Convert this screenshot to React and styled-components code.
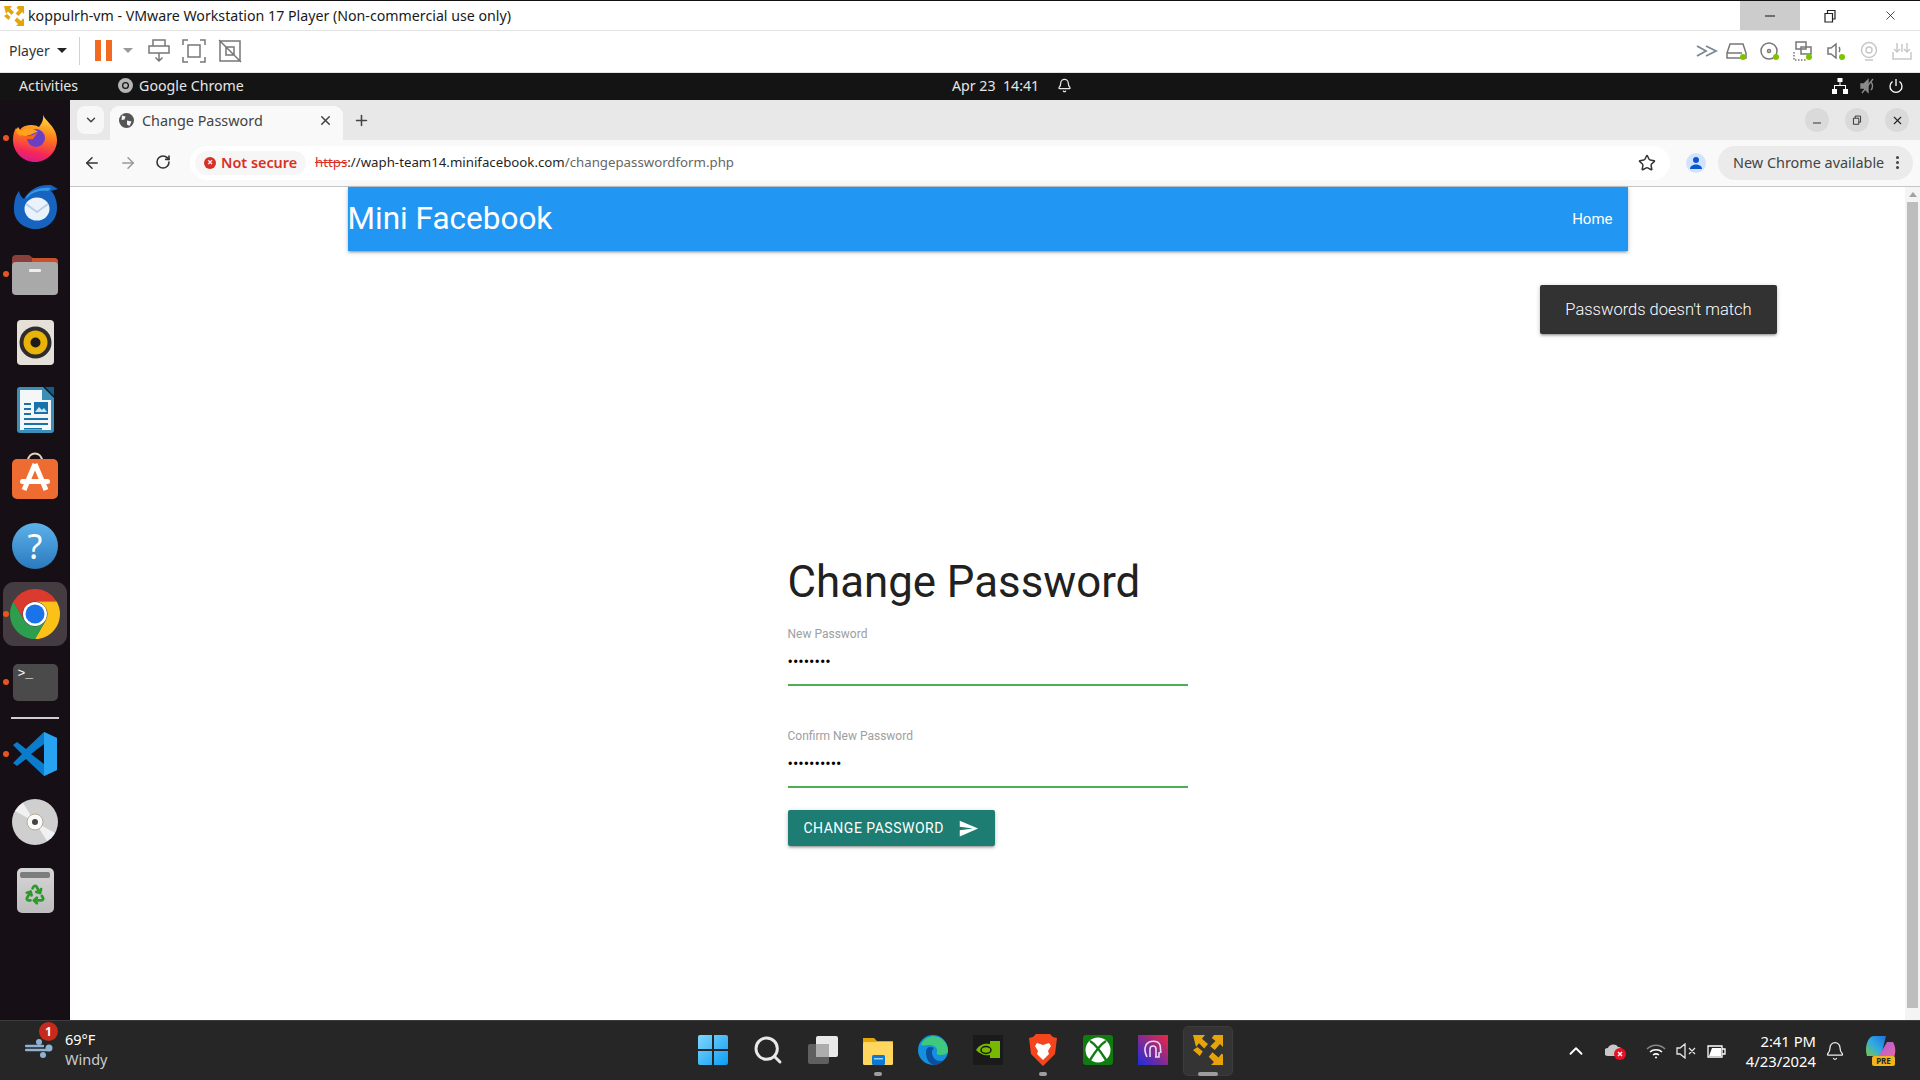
import React from "react";
import styled, { createGlobalStyle } from "styled-components";
import { Recycle, Bell, ChevronUp, ArrowLeft, ArrowRight, RotateCw, X, Plus, ChevronDown, Star, Search } from "lucide-react";

const Global = createGlobalStyle`
  html, body { margin: 0; padding: 0; background: #fff; overflow: hidden; }
  * { box-sizing: border-box; }
  #root { width: 1920px; height: 1080px; }
`;

const Screen = styled.div`
  width: 1920px;
  height: 1080px;
  display: flex;
  flex-direction: column;
  overflow: hidden;
  font-family: "Noto Sans", sans-serif;
`;

/* vmware title + toolbar */
const TitleBar = styled.div`
  height: 30px;
  flex: none;
  border-top: 1px solid #111;
  background: #fff;
  display: flex;
  align-items: center;
  padding-left: 4px;
  font-size: 14.2px;
  color: #1a1a1a;
`;
const TitleText = styled.span`
  flex: 1;
  margin-left: 4px;
  padding-bottom: 1px;
`;
const WinBtn = styled.div`
  width: 60px;
  height: 29px;
  display: flex;
  align-items: center;
  justify-content: center;
  background: ${({ $hover }) => ($hover ? "#cccccc" : "transparent")};
`;
const VmBar = styled.div`
  height: 43px;
  flex: none;
  background: #fff;
  border-top: 1px solid #e4e4e4;
  border-bottom: 1px solid #e4e4e4;
  display: flex;
  align-items: center;
  padding: 0 0 2px 9px;
  color: #333;
  font-size: 14px;
`;
const PlayerLabel = styled.span`
  width: 48px;
`;
const Caret = styled.span`
  width: 0;
  height: 0;
  border-left: 5px solid transparent;
  border-right: 5px solid transparent;
  border-top: 5px solid ${({ $c }) => $c || "#222"};
`;
const VDivider = styled.span`
  width: 1px;
  height: 28px;
  background: #d0d0d0;
  margin: 0 15px 0 12px;
`;
const Pause = styled.span`
  width: 17px;
  height: 21px;
  margin-right: 11px;
  border-left: 6px solid #f26a21;
  border-right: 6px solid #f26a21;
`;
const VmIcons = styled.div`
  display: flex;
  gap: 12px;
  margin-left: 15px;
`;
const Spacer = styled.div`
  flex: 1;
`;
const VmStatus = styled.div`
  display: flex;
  align-items: center;
  gap: 11px;
  margin-right: 7px;
`;
const MoreGlyph = styled.svg`
  margin-right: -3px;
`;

/* ubuntu top bar */
const GnomeBar = styled.div`
  height: 27px;
  flex: none;
  background: #141414;
  color: #e6e6e6;
  font-size: 14.2px;
  display: flex;
  align-items: center;
  padding-bottom: 2px;
`;
const GnomeLeft = styled.div`
  flex: 0 0 952px;
  display: flex;
  align-items: center;
  padding-left: 19px;
`;
const AppName = styled.span`
  display: flex;
  align-items: center;
  gap: 6px;
  margin-left: 40px;
`;
const GnomeClock = styled.div`
  display: flex;
  align-items: center;
  gap: 18px;
  flex: 1;
`;
const GnomeTray = styled.div`
  display: flex;
  align-items: center;
  gap: 12px;
  padding-right: 16px;
`;

const Desktop = styled.div`
  flex: 1;
  min-height: 0;
  display: flex;
`;

/* dock */
const Dock = styled.div`
  width: 70px;
  flex: none;
  background: #170f16;
  display: flex;
  flex-direction: column;
  padding-top: 4px;
`;
const DockItem = styled.div`
  position: relative;
  height: 68px;
  display: flex;
  align-items: center;
  justify-content: center;
  &::before {
    content: "";
    display: ${({ $active }) => ($active ? "block" : "none")};
    position: absolute;
    inset: 2px 3px;
    border-radius: 11px;
    background: #443c40;
  }
  &::after {
    content: "";
    display: ${({ $dot }) => ($dot ? "block" : "none")};
    position: absolute;
    left: 3px;
    top: 31px;
    width: 6px;
    height: 6px;
    border-radius: 50%;
    background: #e95420;
  }
  svg {
    position: relative;
  }
`;
const DockSeparator = styled.div`
  height: 2px;
  margin: 1px 11px 1px;
  background: #cfcfcf;
`;
const TerminalIcon = styled.div`
  position: relative;
  width: 45px;
  height: 37px;
  border-radius: 5px;
  background: #4a4a4a;
  color: #fff;
  font: 13px "Liberation Mono", monospace;
  padding: 2px 0 0 5px;
`;
const HelpIcon = styled.div`
  width: 46px;
  height: 46px;
  border-radius: 50%;
  background: linear-gradient(#5db2ea, #2a79bd);
  color: #fff;
  font: 34px/46px "Noto Sans", sans-serif;
  text-align: center;
`;
const TrashIcon = styled.div`
  width: 37px;
  height: 45px;
  border-radius: 5px;
  background: linear-gradient(#d6d6d6, #bdbdbd);
  padding-top: 4px;
  display: flex;
  flex-direction: column;
  align-items: center;
  gap: 5px;
  &::before {
    content: "";
    width: 30px;
    height: 6px;
    border-radius: 2px;
    background: #7d7d7d;
  }
`;
const BagSvg = styled.svg`
  margin-top: -5px;
`;

/* chrome */
const Chrome = styled.div`
  flex: 1;
  min-width: 0;
  display: flex;
  flex-direction: column;
`;
const TabStrip = styled.div`
  height: 40px;
  flex: none;
  background: #e8e8e8;
  display: flex;
  align-items: flex-end;
  padding-left: 7px;
  color: #444;
`;
const TabMenu = styled.div`
  width: 27px;
  height: 28px;
  margin-bottom: 6px;
  border-radius: 8px;
  background: #f7f7f7;
  display: flex;
  align-items: center;
  justify-content: center;
`;
const Tab = styled.div`
  position: relative;
  width: 233px;
  height: 34px;
  margin-left: 6px;
  border-radius: 9px 9px 0 0;
  background: #f9f9f9;
  display: flex;
  align-items: center;
  padding: 0 10px 6px 9px;
  gap: 8px;
  font-size: 14.4px;
  color: #444;
`;
const TabTitle = styled.span`
  flex: 1;
`;
const NewTab = styled.div`
  margin: 0 0 8px 10px;
  height: 24px;
  display: flex;
  align-items: center;
`;
const WindowControls = styled.div`
  margin: 0 11px 8px auto;
  display: flex;
  gap: 16px;
`;
const RoundCtl = styled.div`
  width: 24px;
  height: 24px;
  border-radius: 50%;
  background: #dadada;
  display: flex;
  align-items: center;
  justify-content: center;
`;
const AddressBar = styled.div`
  height: 47px;
  flex: none;
  background: #f9f9f9;
  border-bottom: 1px solid #c6c6c6;
  display: flex;
  align-items: center;
  padding: 0 7px 0 13px;
  color: #444;
`;
const NavButtons = styled.div`
  display: flex;
  gap: 18px;
  margin-right: 19px;
`;
const Omnibox = styled.div`
  width: 1481px;
  height: 34px;
  border-radius: 17px;
  background: #fff;
  display: flex;
  align-items: center;
  padding: 0 14px 0 5px;
  font-size: 13.25px;
`;
const SecurePill = styled.div`
  width: 111px;
  height: 24px;
  border-radius: 12px;
  background: #f6f6f6;
  display: flex;
  align-items: center;
  gap: 5px;
  padding: 0 0 1px 9px;
  color: #d93025;
  font-weight: 600;
  font-size: 14.4px;
  margin-right: 9px;
`;
const SecureDot = styled.span`
  flex: none;
  width: 12px;
  height: 12px;
  border-radius: 50%;
  background: #d93025;
  color: #fff;
  font-size: 10px;
  line-height: 11px;
  text-align: center;
  font-weight: 700;
`;
const Url = styled.div`
  flex: 1;
  color: #1f1f1f;
  white-space: nowrap;
  padding-bottom: 2px;
`;
const Scheme = styled.span`
  color: #d93025;
  text-decoration: line-through;
`;
const UrlPath = styled.span`
  color: #666;
`;
const Avatar = styled.div`
  width: 20px;
  height: 20px;
  margin: 0 12px 0 16px;
  border-radius: 50%;
  background: #d3e3fd;
  display: flex;
  align-items: center;
  justify-content: center;
`;
const UpdateChip = styled.div`
  width: 195px;
  height: 34px;
  border-radius: 17px;
  background: #ebebeb;
  display: flex;
  align-items: center;
  justify-content: space-between;
  padding: 0 14px 2px 15px;
  font-size: 14.4px;
  color: #444;
  white-space: nowrap;
`;
const Kebab = styled.span`
  width: 3px;
  height: 3px;
  border-radius: 50%;
  background: #444;
  box-shadow: 0 -5px #444, 0 5px #444;
`;

/* the page */
const Viewport = styled.div`
  flex: 1;
  min-height: 0;
  display: flex;
  background: #fff;
`;
const Page = styled.div`
  position: relative;
  flex: 1;
  font-family: Roboto, sans-serif;
`;
const Navbar = styled.nav`
  width: 1280px;
  height: 64px;
  margin: 0 auto;
  background: #2196f3;
  color: #fff;
  display: flex;
  align-items: center;
  justify-content: space-between;
  padding-right: 15px;
  box-shadow: 0 2px 2px 0 rgba(0, 0, 0, 0.14), 0 3px 1px -2px rgba(0, 0, 0, 0.12),
    0 1px 5px 0 rgba(0, 0, 0, 0.2);
`;
const Brand = styled.span`
  font-size: 31.5px;
  padding-bottom: 2px;
`;
const NavLink = styled.span`
  font-size: 15px;
`;
const Toast = styled.div`
  position: absolute;
  top: 98px;
  left: 1470px;
  width: 237px;
  height: 49px;
  border-radius: 2px;
  background: #323232;
  color: #fff;
  font-size: 16.5px;
  font-weight: 300;
  display: flex;
  align-items: center;
  justify-content: center;
  white-space: nowrap;
  box-shadow: 0 2px 2px 0 rgba(0, 0, 0, 0.14), 0 3px 1px -2px rgba(0, 0, 0, 0.12),
    0 1px 5px 0 rgba(0, 0, 0, 0.2);
`;
const Form = styled.form`
  width: 400px;
  margin: 301px auto 0;
`;
const Heading = styled.h1`
  margin: 0 0 15px;
  font-size: 43.8px;
  font-weight: 400;
  line-height: 60px;
  color: #212121;
`;
const Field = styled.label`
  display: block;
  margin-bottom: 43px;
  &:last-of-type {
    margin-bottom: 22px;
  }
`;
const FieldLabel = styled.span`
  display: block;
  font-size: 12px;
  line-height: 14px;
  color: #9e9e9e;
`;
const Input = styled.input`
  display: block;
  width: 100%;
  height: 42px;
  margin-top: 3px;
  padding: 0 0 6px;
  border: 0;
  border-bottom: 2px solid #4caf50;
  outline: 0;
  background: transparent;
  font: 16px Roboto, sans-serif;
  color: #000;
`;
const Submit = styled.button`
  height: 36px;
  padding: 0 16px;
  border: 0;
  border-radius: 2px;
  background: #1d7d72;
  color: #fff;
  font: 400 14px Roboto, sans-serif;
  letter-spacing: 0.5px;
  text-transform: uppercase;
  display: flex;
  align-items: center;
  gap: 14px;
  box-shadow: 0 2px 2px 0 rgba(0, 0, 0, 0.14), 0 3px 1px -2px rgba(0, 0, 0, 0.12),
    0 1px 5px 0 rgba(0, 0, 0, 0.2);
`;
const Scrollbar = styled.div`
  width: 15px;
  flex: none;
  background: #f4f4f4;
  display: flex;
  flex-direction: column;
  align-items: center;
  padding: 5px 0 12px;
`;
const ScrollArrow = styled.span`
  width: 0;
  height: 0;
  border-left: 4px solid transparent;
  border-right: 4px solid transparent;
  border-bottom: 5px solid #a3a3a3;
`;
const Thumb = styled.div`
  flex: 1;
  width: 11px;
  margin-top: 5px;
  background: #bdbdbd;
`;

/* windows taskbar */
const Taskbar = styled.div`
  height: 60px;
  flex: none;
  background: #262626;
  border-top: 1px solid #3d3d3d;
  display: grid;
  grid-template-columns: 1fr auto 1fr;
  align-items: center;
  color: #fff;
  font-family: "Noto Sans", sans-serif;
`;
const Weather = styled.div`
  display: flex;
  align-items: center;
  padding: 0 0 3px 25px;
  gap: 12px;
  font-size: 14.5px;
  line-height: 20px;
`;
const WeatherIcon = styled.div`
  position: relative;
  width: 28px;
  height: 20px;
`;
const Badge = styled.span`
  position: absolute;
  top: -17px;
  left: 14px;
  width: 19px;
  height: 19px;
  border-radius: 50%;
  background: #c42b1c;
  font-size: 12px;
  line-height: 19px;
  font-weight: 700;
  text-align: center;
`;
const Muted = styled.div`
  color: #cccccc;
`;
const TaskIcons = styled.div`
  display: flex;
`;
const TaskItem = styled.div`
  position: relative;
  width: 55px;
  height: 50px;
  padding-bottom: 2px;
  display: flex;
  align-items: center;
  justify-content: center;
  &::before {
    content: "";
    display: ${({ $active }) => ($active ? "block" : "none")};
    position: absolute;
    inset: 0 2.5px;
    border-radius: 5px;
    background: #343434;
    border: 1px solid #3c3c3c;
  }
  &::after {
    content: "";
    display: ${({ $run }) => ($run ? "block" : "none")};
    position: absolute;
    left: 50%;
    bottom: 0;
    width: ${({ $active }) => ($active ? "20px" : "8px")};
    height: 4px;
    margin-left: ${({ $active }) => ($active ? "-10px" : "-4px")};
    border-radius: 2px;
    background: #9d9d9d;
  }
  svg {
    position: relative;
  }
`;
const Tray = styled.div`
  display: flex;
  align-items: center;
  justify-content: flex-end;
  padding-right: 23px;
`;
const TrayIcons = styled.div`
  display: flex;
  align-items: center;
  gap: ${({ $gap }) => $gap}px;
  margin-right: ${({ $after }) => $after || 0}px;
`;
const Clock = styled.div`
  width: 90px;
  text-align: right;
  font-size: 14.8px;
  line-height: 20px;
  white-space: nowrap;
`;
const BellSlot = styled.div`
  margin: 0 20px 0 9px;
  display: flex;
`;

/* drawings */
const Firefox = () => (
  <svg width="46" height="48" viewBox="0 0 46 48">
    <defs>
      <linearGradient id="ff" x1="0.6" y1="0" x2="0.4" y2="1">
        <stop offset="0" stopColor="#ffe03a" />
        <stop offset="0.45" stopColor="#ff7a1a" />
        <stop offset="0.8" stopColor="#f5275a" />
        <stop offset="1" stopColor="#d91a8c" />
      </linearGradient>
    </defs>
    <path d="M31 0c1 7 14 12 14 26 0 12-10 22-22 22S1 38 1 26c0-5 1-9 3-12l3 4c1-3 3-5 6-6 6-2 11-1 14 1 3-4 5-8 4-13z" fill="url(#ff)" />
    <circle cx="24" cy="24" r="9" fill="#6b3fc4" />
    <path d="M4 16c2 8 8 6 14 5 3-1 5-3 8-3-4-4-12-5-17-1l-3-4z" fill="#ffa21c" />
    <path d="M8 20c6 4 13 2 18-2l-5 7c-5 1-10-1-13-5z" fill="#f7641e" />
  </svg>
);
const Thunderbird = () => (
  <svg width="48" height="48" viewBox="0 0 48 48">
    <path d="M3 28c0-8 1-14 5-19 1 4 2 6 5 8 5-9 14-15 27-14l7 4-7 2c4 4 6 10 6 17 0 12-9 21-21 21S3 39 3 28z" fill="#1664c0" />
    <path d="M14 17c5-8 13-12 26-11l-3 3c-6-1-15 0-20 6z" fill="#3a9ae8" />
    <ellipse cx="26" cy="27" rx="12.500" ry="11.500" fill="#eaf2fb" />
    <path d="M15 22l11 8 11-8" fill="none" stroke="#b9cfe8" strokeWidth="2" />
  </svg>
);
const Folder = () => (
  <svg width="46" height="41" viewBox="0 0 46 41">
    <path d="M0 5a4 4 0 0 1 4-4h13l4 3h21a4 4 0 0 1 4 4v12H0z" fill="#8a3f3c" />
    <path d="M20 4h22a4 4 0 0 1 4 4v6H20z" fill="#c9512c" />
    <rect y="8" width="46" height="33" rx="4" fill="#a9a9a9" />
    <rect x="17" y="15" width="12" height="3" rx="1" fill="#eee" />
  </svg>
);
const Speaker = () => (
  <svg width="37" height="45" viewBox="0 0 37 45">
    <rect width="37" height="45" rx="4" fill="#e6e1d8" />
    <circle cx="18.5" cy="22.5" r="16" fill="#2e2d2b" />
    <circle cx="18.5" cy="22.5" r="12" fill="#eab308" />
    <circle cx="18.5" cy="22.5" r="5" fill="#1c1c1c" />
  </svg>
);
const Writer = () => (
  <svg width="37" height="46" viewBox="0 0 37 46">
    <path d="M3 0h23l11 11v32a3 3 0 0 1-3 3H3a3 3 0 0 1-3-3V3a3 3 0 0 1 3-3z" fill="#3a8fb7" />
    <path d="M3 3h22v10h9v30H3z" fill="#f4f6f8" />
    <path d="M28 0l9 9V0z" fill="#135e87" />
    <g fill="#1873aa">
      <rect x="7" y="16" width="7" height="2" />
      <rect x="7" y="21" width="7" height="2" />
      <rect x="7" y="26" width="7" height="2" />
      <rect x="7" y="31" width="24" height="2" />
      <rect x="7" y="36" width="24" height="2" />
      <rect x="7" y="41" width="18" height="1.6" />
      <rect x="17" y="15" width="14" height="12" />
    </g>
    <path d="M18 25l4-5 3 3 2-2 3 4z" fill="#d2e4f2" />
  </svg>
);
const AppStore = () => (
  <BagSvg width="46" height="47" viewBox="0 0 46 47">
    <path d="M16 9c0-10 14-10 14 0" fill="none" stroke="#e9d2bd" strokeWidth="2" />
    <rect y="7" width="46" height="40" rx="5" fill="#ee6b32" />
    <path d="M23 12L12 38M23 12l11 26" stroke="#fff" strokeWidth="5" />
    <rect x="8" y="27" width="30" height="5" rx="2.5" fill="#fff" />
  </BagSvg>
);
const ChromeLogo = ({ size = 50 }) => (
  <svg width={size} height={size} viewBox="4 4 40 40">
    <path d="M24 4a20 20 0 0 1 17.32 10H24a10 10 0 0 0-8.66 15L6.68 14A20 20 0 0 1 24 4z" fill="#db3a2f" />
    <path d="M41.32 14A20 20 0 0 1 24 44l8.66-15A10 10 0 0 0 24 14z" fill="#fbc116" />
    <path d="M6.68 14l8.66 15a10 10 0 0 0 17.32 0L24 44A20 20 0 0 1 6.68 14z" fill="#2d9e4d" />
    <circle cx="24" cy="24" r="9.6" fill="#fff" />
    <circle cx="24" cy="24" r="7.6" fill="#1a73e8" />
  </svg>
);
const VsCode = () => (
  <svg width="44" height="44" viewBox="0 0 44 44">
    <path d="M31 0l13 6v32l-13 6-18-17-9 7-4-3 9-9-9-9 4-3 9 7z" fill="#0a7ccb" />
    <path d="M31 0l13 6v32l-13 6z" fill="#27a3f2" />
    <path d="M31 12L18 22l13 10z" fill="#170f16" />
  </svg>
);
const Disc = () => (
  <svg width="46" height="46" viewBox="0 0 46 46">
    <circle cx="23" cy="23" r="23" fill="#cfcfcf" />
    <path d="M23 23L3 12a23 23 0 0 1 8-8zM23 23l20 11a23 23 0 0 1-8 8z" fill="#f1f1f1" />
    <circle cx="23" cy="23" r="8" fill="#fafafa" stroke="#b5ac9a" />
    <circle cx="23" cy="23" r="3" fill="#444" />
  </svg>
);

const StatusDot = () => <circle cx="17" cy="17" r="3" fill="#7dc400" stroke="none" />;
const Drive = () => (
  <svg width="22" height="22" viewBox="0 0 22 22" fill="none" stroke="#777" strokeWidth="1.5">
    <path d="M1 18V13L4 4h13l3 9v5zM1 13h15" />
    <StatusDot />
  </svg>
);
const CdStatus = () => (
  <svg width="22" height="22" viewBox="0 0 22 22" fill="none" stroke="#777" strokeWidth="1.5">
    <circle cx="10" cy="11" r="8" />
    <circle cx="10" cy="11" r="1.5" />
    <StatusDot />
  </svg>
);
const NetStatus = () => (
  <svg width="22" height="22" viewBox="0 0 22 22" fill="none" stroke="#777" strokeWidth="1.5">
    <path d="M4 2h10v7H4zM9 7h10v7H9z" fill="#fff" />
    <path d="M2 12v8h12" strokeDasharray="1.5 1.5" />
    <StatusDot />
  </svg>
);
const SoundStatus = () => (
  <svg width="22" height="22" viewBox="0 0 22 22" fill="none" stroke="#777" strokeWidth="1.5">
    <path d="M3 8v6h3l5 4V4L6 8zM14 7c1 1 1 4 0 5" />
    <StatusDot />
  </svg>
);
const Webcam = () => (
  <svg width="22" height="22" viewBox="0 0 22 22" fill="none" stroke="#c9c9c9" strokeWidth="1.5">
    <circle cx="11" cy="10" r="7.5" />
    <circle cx="11" cy="10" r="3" />
    <path d="M7 20h8" />
  </svg>
);
const Usb = () => (
  <svg width="22" height="22" viewBox="0 0 22 22" fill="none" stroke="#c9c9c9" strokeWidth="1.5">
    <path d="M2 12v7h18v-7M6 3v9M16 3v9M11 4v8M3 9l3 3 3-3M13 9l3 3 3-3" />
  </svg>
);
const SendKeys = () => (
  <svg width="22" height="24" viewBox="0 0 22 24" fill="none" stroke="#777" strokeWidth="1.5">
    <path d="M5 1h12v6H5zM1 7h20v7H1zM11 14v8M7.500 18.500l3.500 3.500 3.500-3.500" />
  </svg>
);
const FitGuest = () => (
  <svg width="24" height="24" viewBox="0 0 24 24" fill="none" stroke="#777" strokeWidth="1.5">
    <path d="M1 6V1h5M18 1h5v5M23 18v5h-5M6 23H1v-5M6 6h12v12H6z" />
  </svg>
);
const NoFit = () => (
  <svg width="24" height="24" viewBox="0 0 24 24" fill="none" stroke="#777" strokeWidth="1.5">
    <path d="M2 2h20v20H2zM8 8h8v8H8zM1 1l22 22" />
  </svg>
);
const VmLogo = ({ size = 20 }) => (
  <svg width={size} height={size} viewBox="0 0 20 20" fill="#e5a50a">
    <path d="M0 0h8L6 2.500l4 3.500-2.500 3L4 5.500 2 8zM20 0v8l-2-2-3.500 4-3-2.500L15 4l-2.500-2L14 0zM20 20h-8l2-2-3.500-3.500 2.500-3 4 3.500 2-2.500 1 .5zM0 10l3-2 3.500 3-2 3z" />
  </svg>
);
const MonoChrome = () => (
  <svg width="15" height="15" viewBox="0 0 15 15">
    <circle cx="7.5" cy="7.5" r="7.5" fill="#b5b5b5" />
    <circle cx="7.5" cy="7.5" r="3.5" fill="#141414" />
    <circle cx="7.5" cy="7.5" r="2.2" fill="#b5b5b5" />
  </svg>
);
const TabGlobe = () => (
  <svg width="15" height="15" viewBox="0 0 15 15">
    <circle cx="7.5" cy="7.5" r="7.5" fill="#555" />
    <path d="M3 2.500l3.500 1-1 3-3 .5zM8 7.500l4.500 1-2 4.500-2.500-1.500z" fill="#f9f9f9" />
  </svg>
);
const NetTree = () => (
  <svg width="16" height="16" viewBox="0 0 16 16" fill="#fff">
    <rect x="5.5" y="0" width="5" height="4" />
    <rect x="0" y="11" width="5" height="5" />
    <rect x="11" y="11" width="5" height="5" />
    <path d="M7.5 4h1v3h5.5v4h-1V8H3v3H2V7h5.5z" />
  </svg>
);
const Muteish = () => (
  <svg width="16" height="16" viewBox="0 0 16 16" fill="none" stroke="#8a8a8a" strokeWidth="1.4">
    <path d="M1 6v4h3l4 4V2L4 6z" fill="#8a8a8a" />
    <path d="M11 4c2 2 2 6 0 8M2 15L13 1" />
  </svg>
);
const Power = () => (
  <svg width="16" height="16" viewBox="0 0 16 16" fill="none" stroke="#fff" strokeWidth="1.3">
    <path d="M8 1v7M4.5 3.5a6 6 0 1 0 7 0" />
  </svg>
);
const SendIcon = () => (
  <svg width="21" height="21" viewBox="0 0 24 24" fill="#fff">
    <path d="M2.01 21L23 12 2.01 3 2 10l15 2-15 2z" />
  </svg>
);
const Person = () => (
  <svg width="14" height="14" viewBox="0 0 14 14" fill="#0b57d0">
    <circle cx="7" cy="4" r="3" />
    <path d="M1 13c0-3 3-4.500 6-4.500s6 1.500 6 4.500z" />
  </svg>
);
const RestoreSmall = ({ size = 14 }) => (
  <svg width={size} height={size} viewBox="0 0 14 14" fill="none" stroke="#222" strokeWidth="1.2">
    <path d="M2 4.500h7.500V13H2zM4.500 4.500V1.500H12V10H9.500" />
  </svg>
);
const WindIcon = () => (
  <svg width="28" height="20" viewBox="0 0 28 20" fill="none" stroke="#8fb1d3" strokeWidth="2.4" strokeLinecap="round">
    <path d="M1 7h17M1 11h22" />
    <circle cx="14" cy="3" r="3" fill="#8fb1d3" stroke="none" />
    <circle cx="24" cy="9" r="3.5" fill="#8fb1d3" stroke="none" />
    <circle cx="18" cy="16" r="3" fill="#8fb1d3" stroke="none" />
  </svg>
);
const WinLogo = () => (
  <svg width="30" height="30" viewBox="0 0 30 30">
    <defs>
      <linearGradient id="win" x1="0" y1="0" x2="1" y2="1">
        <stop offset="0" stopColor="#7fd8ff" />
        <stop offset="1" stopColor="#0c9cf2" />
      </linearGradient>
    </defs>
    <path d="M0 2a2 2 0 0 1 2-2h12v14H0zM16 0h12a2 2 0 0 1 2 2v12H16zM0 16h14v14H2a2 2 0 0 1-2-2zM16 16h14v12a2 2 0 0 1-2 2H16z" fill="url(#win)" />
  </svg>
);
const TaskView = () => (
  <svg width="30" height="30" viewBox="0 0 30 30">
    <rect x="0" y="9" width="21" height="20" rx="2" fill="#5f5f5f" />
    <rect x="8" y="1" width="22" height="21" rx="2" fill="#e9e9e9" />
    <rect x="8" y="9" width="13" height="13" fill="#adadad" />
  </svg>
);
const Explorer = () => (
  <svg width="30" height="30" viewBox="0 0 30 30">
    <path d="M0 3h11l3 3h16v6H0z" fill="#e5a50a" />
    <rect y="7" width="30" height="23" rx="1.500" fill="#ffd75e" />
    <rect x="9" y="20" width="13" height="10" rx="1.500" fill="#0a78d4" />
    <rect x="11" y="23" width="9" height="1.500" fill="#9ad2f5" />
  </svg>
);
const Edge = () => (
  <svg width="30" height="30" viewBox="0 0 30 30">
    <circle cx="15" cy="15" r="15" fill="#1490df" />
    <path d="M3 10C6 2 14 0 20 2c6 2 10 8 10 14 0 3-3 4-8 4-3 0-4-1-3-3 1-4-3-7-7-7-4 0-7 1-9 0z" fill="#3ec97e" />
    <path d="M8 17c0-5 4-6 8-4-3 2-3 8 2 12 3 2 7 1 9-1-3 4-7 6-11 6-5-1-8-6-8-13z" fill="#0b4f9e" />
  </svg>
);
const Nvidia = () => (
  <svg width="30" height="30" viewBox="0 0 30 30">
    <rect width="30" height="30" fill="#1a1a1a" />
    <path d="M3 15c4-6 9-7 14-6v-3h10v17H17v-3c-6 1-10-1-14-5z" fill="#76b900" />
    <ellipse cx="13" cy="15" rx="5" ry="3.500" fill="none" stroke="#1a1a1a" strokeWidth="1.500" />
  </svg>
);
const Brave = () => (
  <svg width="28" height="32" viewBox="0 0 28 32">
    <path d="M7 0h14l3 3 4 1-2 16-12 12L2 20 0 4l4-1z" fill="#f5451d" />
    <path d="M8 9l6 2 6-2 2 3-3 5 1 3-6 6-6-6 1-3-3-5z" fill="#fff" />
  </svg>
);
const Xbox = () => (
  <svg width="30" height="30" viewBox="0 0 30 30">
    <rect width="30" height="30" rx="3" fill="#107c10" />
    <circle cx="15" cy="15" r="12.500" fill="#fff" />
    <path d="M7 6c5 3 11 11 16 19M23 6C18 9 12 17 7 25" fill="none" stroke="#107c10" strokeWidth="2.400" />
  </svg>
);
const Clipchamp = () => (
  <svg width="30" height="30" viewBox="0 0 30 30">
    <defs>
      <linearGradient id="cc" x1="0" y1="1" x2="1" y2="0">
        <stop offset="0" stopColor="#1c2ee0" />
        <stop offset="1" stopColor="#f0273f" />
      </linearGradient>
    </defs>
    <rect width="30" height="30" fill="url(#cc)" />
    <path d="M9 22c-2-4-3-8-1-12 3-5 12-5 14 0 1 4 0 5 1 7l-2 1v4h-4M12 22v-8a3 3 0 0 1 6 0v8" fill="none" stroke="#e8d8f5" strokeWidth="1.600" />
  </svg>
);
const CloudOff = () => (
  <svg width="22" height="18" viewBox="0 0 22 18">
    <path d="M3 14a4 4 0 0 1 0-8c1-4 8-5 10-1 3 0 4 2 4 4v5z" fill="#c8c8c8" />
    <circle cx="15" cy="12" r="6" fill="#e81123" />
    <path d="M13 10l4 4M17 10l-4 4" stroke="#fff" strokeWidth="1.400" />
  </svg>
);
const Wifi = () => (
  <svg width="20" height="16" viewBox="0 0 20 16" fill="none" stroke="#fff" strokeWidth="1.500">
    <path d="M1 6c5-5 13-5 18 0" stroke="#888" />
    <path d="M4 9c3-3 9-3 12 0M7 12c2-1.500 4-1.500 6 0" />
    <circle cx="10" cy="14.500" r="1" fill="#fff" stroke="none" />
  </svg>
);
const SpeakerMute = () => (
  <svg width="20" height="16" viewBox="0 0 20 16" fill="none" stroke="#e5e5e5" strokeWidth="1.300">
    <path d="M1 5v6h3l5 4V1L4 5zM13 5l6 6M19 5l-6 6" />
  </svg>
);
const Battery = () => (
  <svg width="20" height="17" viewBox="0 0 20 17" fill="none" stroke="#fff" strokeWidth="1.300">
    <path d="M2 4h14v11H2zM16 7h3v5h-3" />
    <path d="M3 14l3-8h9v8z" fill="#fff" stroke="none" />
  </svg>
);
const Copilot = () => (
  <svg width="32" height="32" viewBox="0 0 32 32">
    <defs>
      <linearGradient id="cp" x1="0" y1="1" x2="1" y2="0">
        <stop offset="0" stopColor="#7ac943" />
        <stop offset="0.5" stopColor="#30a8e6" />
        <stop offset="1" stopColor="#1d70d8" />
      </linearGradient>
      <linearGradient id="cp2" x1="0" y1="0" x2="1" y2="1">
        <stop offset="0" stopColor="#a45bd8" />
        <stop offset="1" stopColor="#ee6aa8" />
      </linearGradient>
    </defs>
    <path d="M9 1h12l-5 20H2C-1 12 3 1 9 1z" fill="url(#cp)" />
    <path d="M22 7h6c3 5 3 12 0 17H12z" fill="url(#cp2)" />
    <rect x="7" y="21" width="23" height="10" rx="2" fill="#f0b41e" />
    <text x="18.500" y="29" fontSize="8" fontWeight="700" textAnchor="middle" fill="#222" fontFamily="Noto Sans">PRE</text>
  </svg>
);

const dockOne = [
  { icon: <Firefox />, dot: true },
  { icon: <Thunderbird /> },
  { icon: <Folder />, dot: true },
  { icon: <Speaker /> },
  { icon: <Writer /> },
  { icon: <AppStore /> },
  { icon: <HelpIcon>?</HelpIcon> },
  { icon: <ChromeLogo />, dot: true, active: true },
  { icon: <TerminalIcon>&gt;_</TerminalIcon>, dot: true },
];
const dockTwo = [
  { icon: <VsCode />, dot: true },
  { icon: <Disc /> },
  {
    icon: (
      <TrashIcon>
        <Recycle size={22} color="#2e9a2e" strokeWidth={3} />
      </TrashIcon>
    ),
  },
];
const tasks = [
  { icon: <WinLogo /> },
  { icon: <Search size={32} color="#e8e8e8" strokeWidth={2.2} /> },
  { icon: <TaskView /> },
  { icon: <Explorer />, run: true },
  { icon: <Edge /> },
  { icon: <Nvidia /> },
  { icon: <Brave />, run: true },
  { icon: <Xbox /> },
  { icon: <Clipchamp /> },
  { icon: <VmLogo size={30} />, run: true, active: true },
];

const App = () => (
  <Screen>
    <Global />
    <TitleBar>
      <VmLogo />
      <TitleText>koppulrh-vm - VMware Workstation 17 Player (Non-commercial use only)</TitleText>
      <WinBtn $hover>
        <svg width="10" height="10" viewBox="0 0 10 10" stroke="#111"><path d="M0 5h10" /></svg>
      </WinBtn>
      <WinBtn>
        <RestoreSmall />
      </WinBtn>
      <WinBtn>
        <X size={15} color="#111" strokeWidth={1.2} />
      </WinBtn>
    </TitleBar>
    <VmBar>
      <PlayerLabel>Player</PlayerLabel>
      <Caret />
      <VDivider />
      <Pause />
      <Caret $c="#999" />
      <VmIcons>
        <SendKeys />
        <FitGuest />
        <NoFit />
      </VmIcons>
      <Spacer />
      <VmStatus>
        <MoreGlyph width="22" height="14" viewBox="0 0 22 14" fill="none" stroke="#7b8790" strokeWidth="1.800"><path d="M1 2l9 5-9 5M10 2l10 5-10 5" /></MoreGlyph>
        <Drive />
        <CdStatus />
        <NetStatus />
        <SoundStatus />
        <Webcam />
        <Usb />
      </VmStatus>
    </VmBar>
    <GnomeBar>
      <GnomeLeft>
        Activities
        <AppName>
          <MonoChrome />
          Google Chrome
        </AppName>
      </GnomeLeft>
      <GnomeClock>
        Apr 23&nbsp; 14:41
        <Bell size={15} color="#e6e6e6" />
      </GnomeClock>
      <GnomeTray>
        <NetTree />
        <Muteish />
        <Power />
      </GnomeTray>
    </GnomeBar>
    <Desktop>
      <Dock>
        {dockOne.map((d, i) => (
          <DockItem key={i} $dot={d.dot} $active={d.active}>
            {d.icon}
          </DockItem>
        ))}
        <DockSeparator />
        {dockTwo.map((d, i) => (
          <DockItem key={i} $dot={d.dot}>
            {d.icon}
          </DockItem>
        ))}
      </Dock>
      <Chrome>
        <TabStrip>
          <TabMenu>
            <ChevronDown size={14} strokeWidth={2.5} />
          </TabMenu>
          <Tab>
            <TabGlobe />
            <TabTitle>Change Password</TabTitle>
            <X size={15} strokeWidth={2.4} />
          </Tab>
          <NewTab>
            <Plus size={17} strokeWidth={2.2} />
          </NewTab>
          <WindowControls>
            <RoundCtl>
              <svg width="10" height="10" viewBox="0 0 10 10" stroke="#333"><path d="M1 8h8" /></svg>
            </RoundCtl>
            <RoundCtl>
              <RestoreSmall size={10} />
            </RoundCtl>
            <RoundCtl>
              <X size={13} color="#222" />
            </RoundCtl>
          </WindowControls>
        </TabStrip>
        <AddressBar>
          <NavButtons>
            <ArrowLeft size={18} color="#333" />
            <ArrowRight size={18} color="#999" />
            <RotateCw size={16} color="#333" strokeWidth={2.4} />
          </NavButtons>
          <Omnibox>
            <SecurePill>
              <SecureDot>×</SecureDot>
              Not secure
            </SecurePill>
            <Url>
              <Scheme>https</Scheme>://waph-team14.minifacebook.com<UrlPath>/changepasswordform.php</UrlPath>
            </Url>
            <Star size={18} color="#333" strokeWidth={2} />
          </Omnibox>
          <Avatar>
            <Person />
          </Avatar>
          <UpdateChip>
            New Chrome available
            <Kebab />
          </UpdateChip>
        </AddressBar>
        <Viewport>
          <Page>
            <Navbar>
              <Brand>Mini Facebook</Brand>
              <NavLink>Home</NavLink>
            </Navbar>
            <Toast>Passwords doesn't match</Toast>
            <Form>
              <Heading>Change Password</Heading>
              <Field>
                <FieldLabel>New Password</FieldLabel>
                <Input type="password" defaultValue="password" readOnly />
              </Field>
              <Field>
                <FieldLabel>Confirm New Password</FieldLabel>
                <Input type="password" defaultValue="password12" readOnly />
              </Field>
              <Submit type="button">
                Change Password
                <SendIcon />
              </Submit>
            </Form>
          </Page>
          <Scrollbar>
            <ScrollArrow />
            <Thumb />
          </Scrollbar>
        </Viewport>
      </Chrome>
    </Desktop>
    <Taskbar>
      <Weather>
        <WeatherIcon>
          <WindIcon />
          <Badge>1</Badge>
        </WeatherIcon>
        <div>
          69°F
          <Muted>Windy</Muted>
        </div>
      </Weather>
      <TaskIcons>
        {tasks.map((t, i) => (
          <TaskItem key={i} $run={t.run} $active={t.active}>
            {t.icon}
          </TaskItem>
        ))}
      </TaskIcons>
      <Tray>
        <TrayIcons $gap={18} $after={19}>
          <ChevronUp size={22} color="#fff" />
          <CloudOff />
        </TrayIcons>
        <TrayIcons $gap={10}>
          <Wifi />
          <SpeakerMute />
          <Battery />
        </TrayIcons>
        <Clock>
          2:41 PM
          <br />
          4/23/2024
        </Clock>
        <BellSlot>
          <Bell size={20} color="#eee" strokeWidth={1.5} />
        </BellSlot>
        <Copilot />
      </Tray>
    </Taskbar>
  </Screen>
);

export default App;
